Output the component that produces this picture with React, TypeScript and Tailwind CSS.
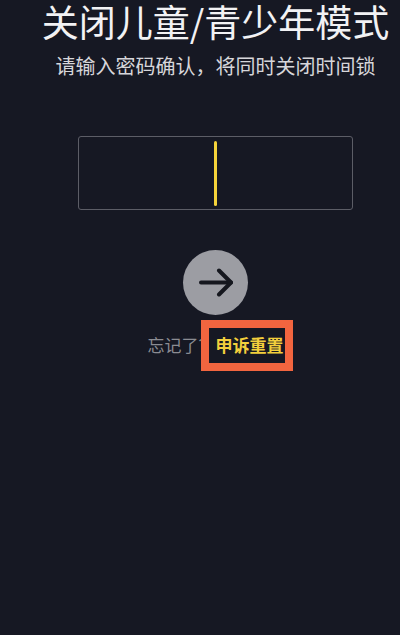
export default function App() {
  return (
    <div className="min-h-[635px] w-full bg-[#161823] font-['Noto_Sans_CJK_SC','Noto_Sans',sans-serif] overflow-hidden">
      <div className="flex flex-col items-center pl-[31px]">
        {/* Header */}
        <h1 className="pt-[1px] text-[37px] leading-[40px] font-normal text-[#f2f2f4] whitespace-nowrap">
          关闭儿童/青少年模式
        </h1>
        <p className="mt-[11px] text-[20px] leading-[28px] text-[#d6d6da] whitespace-nowrap">
          请输入密码确认，将同时关闭时间锁
        </p>

        {/* Password box */}
        <div className="mt-[56px] flex h-[74px] w-[275px] items-center justify-center rounded-[3px] border-[1.5px] border-[#5c5d66]">
          <span className="h-[65px] w-[3px] rounded-full bg-[#f5d33a]" />
        </div>

        {/* Submit */}
        <button className="mt-[40px] flex h-[65px] w-[65px] items-center justify-center rounded-full bg-[#9c9da3]">
          <svg width="34" height="29" viewBox="0 0 34 29" fill="none" stroke="#15171e" strokeWidth="4" strokeLinecap="round" strokeLinejoin="round">
            <path d="M2 14.5h30" />
            <path d="M20 2.5l12 12-12 12" />
          </svg>
        </button>

        {/* Forgot */}
        <div className="relative mt-[18px] flex items-center text-[17px] leading-[24px]">
          <span className="text-[#8b8c92]">忘记了？</span>
          <span className="relative">
            <span className="absolute -left-[15px] -right-[9px] -top-[13px] -bottom-[14px] border-[8px] border-[#f2653f] bg-[#161823]" />
            <span className="relative font-bold text-[#f3cf3c]">申诉重置</span>
          </span>
        </div>
      </div>
    </div>
  );
}
